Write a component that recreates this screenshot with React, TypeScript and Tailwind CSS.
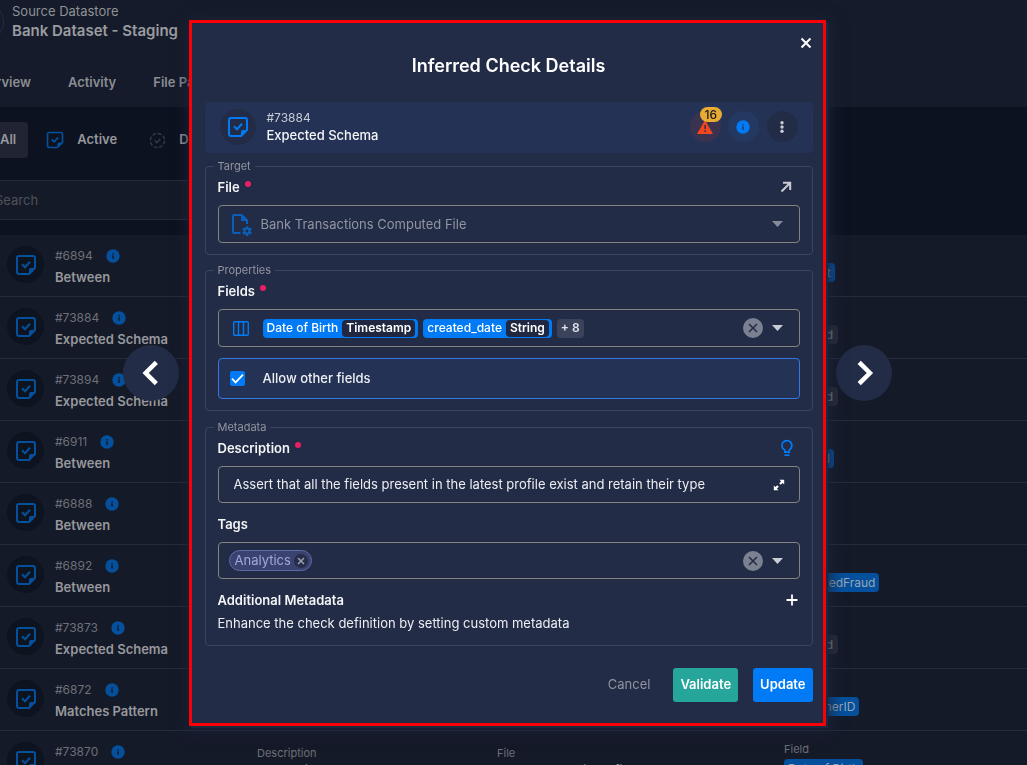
import { useState } from "react";
import type { ReactNode } from "react";

type Check = {
  id: string;
  name: string;
  field?: string;
  muted?: boolean;
  description?: string;
  file?: string;
};

const checks: Check[] = [
  { id: "#6894", name: "Between", field: "amount" },
  { id: "#73884", name: "Expected Schema", field: "+ 1 field", muted: true },
  { id: "#73894", name: "Expected Schema", field: "+ 1 field", muted: true },
  { id: "#6911", name: "Between", field: "interval" },
  { id: "#6888", name: "Between" },
  { id: "#6892", name: "Between", field: "isFlaggedFraud" },
  { id: "#73873", name: "Expected Schema", field: "+ 1 field", muted: true },
  { id: "#6872", name: "Matches Pattern", field: "CustomerID" },
  {
    id: "#73870",
    name: "Metric",
    field: "Date of Birth",
    description: "Values lie between the bounds",
    file: "bank_transactions_file",
  },
];

function CheckNote({ className }: { className: string }) {
  return (
    <svg viewBox="0 0 24 24" fill="none" stroke="currentColor" strokeWidth="2" className={className} aria-hidden="true">
      <path d="M15 21H5a2 2 0 0 1-2-2V5a2 2 0 0 1 2-2h14a2 2 0 0 1 2 2v10z" strokeLinejoin="round" />
      <path d="M15 21v-4a2 2 0 0 1 2-2h4z" fill="currentColor" stroke="none" />
      <path d="M8 11.2l3 3 5-5.4" />
    </svg>
  );
}

function DashedCheck({ className }: { className: string }) {
  return (
    <svg viewBox="0 0 24 24" fill="none" stroke="currentColor" strokeWidth="2" className={className} aria-hidden="true">
      <circle cx="12" cy="12" r="10" strokeDasharray="5.5 2.35" />
      <path d="M8 12l3 3 5-5.4" />
    </svg>
  );
}

function InfoDot({ className, inner }: { className: string; inner: string }) {
  return (
    <svg viewBox="0 0 24 24" className={className} aria-hidden="true">
      <circle cx="12" cy="12" r="11.5" fill="currentColor" />
      <path d="M11 7h2.4v2.4H11zM10.2 11h3.2v6H11v-4h-.8z" className={inner} />
    </svg>
  );
}

function FileCog() {
  return (
    <svg viewBox="0 0 24 24" className="size-6" fill="currentColor" aria-hidden="true">
      <path d="M6 2a2 2 0 0 0-2 2v16a2 2 0 0 0 2 2h6.7a7 7 0 0 1-.6-2H6V4h7v5h5v3.1a7 7 0 0 1 2 0V8l-6-6z" />
      <path d="M13 3h2l5 5v1h-7z" />
      <path
        fillRule="evenodd"
        d="M22.7 19.6V18.6L23.8 17.8C23.9 17.7 24 17.6 23.9 17.5L22.9 15.8C22.9 15.7 22.7 15.7 22.6 15.7L21.4 16.2C21.1 16 20.8 15.8 20.5 15.7L20.3 14.4C20.3 14.3 20.2 14.2 20.1 14.2H18.1C17.9 14.2 17.8 14.3 17.8 14.4L17.6 15.7C17.3 15.9 17.1 16 16.8 16.2L15.6 15.7C15.5 15.7 15.4 15.7 15.3 15.8L14.3 17.5C14.3 17.6 14.3 17.7 14.4 17.8L15.5 18.6V19.6L14.4 20.4C14.3 20.5 14.2 20.6 14.3 20.7L15.3 22.4C15.4 22.5 15.5 22.5 15.6 22.5L16.8 22C17 22.2 17.3 22.4 17.6 22.5L17.8 23.8C17.9 23.9 18 24 18.1 24H20.1C20.2 24 20.3 23.9 20.3 23.8L20.5 22.5C20.8 22.4 21 22.2 21.3 22L22.5 22.4C22.6 22.4 22.7 22.4 22.8 22.3L23.8 20.6C23.9 20.5 23.9 20.4 23.8 20.4ZM19 20.5C18.2 20.5 17.5 19.8 17.5 19S18.2 17.5 19 17.5 20.5 18.2 20.5 19 19.8 20.5 19 20.5Z"
      />
    </svg>
  );
}

function Caret({ className }: { className: string }) {
  return (
    <svg viewBox="0 0 11 6" className={className} fill="currentColor" aria-hidden="true">
      <path d="M0 0h11L5.5 6z" />
    </svg>
  );
}

function ClearIcon() {
  return (
    <svg viewBox="0 0 20 20" className="size-5" aria-hidden="true">
      <circle cx="10" cy="10" r="10" fill="#7c8191" />
      <path d="M6 6l8 8M14 6l-8 8" stroke="#232c46" strokeWidth="1.6" />
    </svg>
  );
}

function Chevron({ flip }: { flip?: boolean }) {
  return (
    <svg viewBox="0 0 24 24" className="size-8" fill="none" stroke="white" strokeWidth="3.4" aria-hidden="true">
      <path d={flip ? "M8.4 4l8 8-8 8" : "M16 4l-8 8 8 8"} />
    </svg>
  );
}

function Section({ title, className, children }: { title: string; className: string; children: ReactNode }) {
  return (
    <fieldset className={`min-w-0 rounded border border-[#3c4560] px-3 pb-[11px] ${className}`}>
      <legend className="-ml-1 px-1 text-[11px] leading-4 text-[#9295a1]">{title}</legend>
      <div className="pt-[3px]">{children}</div>
    </fieldset>
  );
}

function FieldLabel({ htmlFor, required, children }: { htmlFor: string; required?: boolean; children: ReactNode }) {
  return (
    <label htmlFor={htmlFor} className="flex gap-[5px] text-[13px] leading-5 font-semibold text-[#f4f5f7]">
      {children}
      {required && <span className="mt-1 size-[6px] rounded-full bg-[#e91e63]" />}
    </label>
  );
}

function FieldChip({ name, type }: { name: string; type: string }) {
  return (
    <span className="flex h-[19px] items-center rounded bg-[#007bf5] pr-[3px] pl-1 text-xs font-medium text-white">
      {name}
      <span className="ml-1 flex h-[17px] items-center rounded bg-[#1f2840] px-1 text-xs font-semibold">{type}</span>
    </span>
  );
}

function Background() {
  return (
    <div className="h-screen overflow-hidden bg-[#151a29]">
      <header className="h-[107px] bg-[#151b2a]">
        <div className="-ml-9 flex gap-[8px] pt-px">
          <span className="mt-px size-10 rounded-full border border-[#262c3c]" />
          <div>
            <p className="text-[13px] leading-5 text-[#8f9196]">Source Datastore</p>
            <h1 className="text-[15px] leading-5 font-semibold text-[#9b9ca0]">Bank Dataset - Staging</h1>
          </div>
        </div>
        <nav className="-ml-[29px] flex gap-[37px] pt-7 text-[13px] leading-6 font-semibold whitespace-nowrap text-[#8b8d92]">
          <a href="#overview">Overview</a>
          <a href="#activity">Activity</a>
          <a href="#file-patterns">File Patterns</a>
        </nav>
      </header>
      <div className="h-32 bg-[#0d1221] pt-[15px]">
        <div className="-ml-3 flex items-center text-[13px] font-semibold text-[#96979b]">
          <button className="h-9 rounded bg-[#212432] px-3">All</button>
          <button className="flex items-center gap-[12px] pl-[17px]">
            <CheckNote className="size-5 text-[#04509c]" />
            Active
          </button>
          <button className="flex items-center gap-[13px] pl-8">
            <DashedCheck className="size-[17px] text-[#33394b]" />
            Draft
          </button>
        </div>
        <input
          aria-label="Search"
          placeholder="Search"
          className="-ml-5 mt-[22px] h-10 w-3/4 border border-[#262b3a] bg-[#151a29] pl-[14px] text-[13px] placeholder:text-[#4f5259]"
        />
      </div>
      <ul>
        {checks.map((check) => (
          <li
            key={check.id}
            className="grid h-[62px] grid-cols-[48px_202px_240px_287px_1fr] overflow-hidden border-b border-[#262c3a] pl-[7px]"
          >
            <span className="mt-[11px] flex size-[37px] items-center justify-center rounded-full bg-[#0e1320]">
              <CheckNote className="size-6 text-[#04509c]" />
            </span>
            <div className="pt-[11px]">
              <p className="flex items-center gap-[13px] text-xs leading-5 text-[#6d7077]">
                {check.id}
                <InfoDot className="size-[14px] text-[#04509c]" inner="fill-[#151a29]" />
              </p>
              <p className="text-[13px] leading-[22px] font-semibold text-[#97989c]">{check.name}</p>
            </div>
            <div className="pt-[13px]">
              {check.description && (
                <>
                  <p className="text-[11px] leading-[18px] text-[#6d7077]">Description</p>
                  <p className="text-[13px] leading-4 text-[#97989c]">{check.description}</p>
                </>
              )}
            </div>
            <div className="pt-[13px]">
              {check.file && (
                <>
                  <p className="text-[11px] leading-[18px] text-[#6d7077]">File</p>
                  <p className="text-[13px] leading-4 text-[#97989c]">{check.file}</p>
                </>
              )}
            </div>
            {check.field && (
              <div className="pt-[9px]">
                <p className="text-[11px] leading-[18px] text-[#6d7077]">Field</p>
                <p
                  className={
                    check.muted
                      ? "mt-px w-fit rounded bg-[#262b38] px-[5px] text-xs leading-[19px] text-[#8f9196]"
                      : "mt-px w-fit rounded bg-[#04509c] px-1 text-xs leading-[19px] text-[#9aa6b5]"
                  }
                >
                  {check.field}
                </p>
              </div>
            )}
          </li>
        ))}
      </ul>
    </div>
  );
}

const inputBox = "flex items-center rounded border border-[#83837f]";

export default function App() {
  const [allowOther, setAllowOther] = useState(true);
  const [description, setDescription] = useState(
    "Assert that all the fields present in the latest profile exist and retain their type",
  );

  return (
    <div className="font-['Inter','Liberation_Sans',sans-serif]">
      <Background />
      <div className="fixed inset-0 flex items-start justify-center pt-5 pr-[13px]">
        <div className="flex items-center gap-[10px]">
          <button aria-label="Previous check" className="flex size-14 items-center justify-center rounded-full bg-[#232c46]">
            <Chevron />
          </button>

          <section
            role="dialog"
            aria-labelledby="dialog-title"
            className="relative w-[637px] border-[3px] border-[#fb0007] bg-[#232c46] pt-[29px] pr-[10px] pb-[21px] pl-[13px] shadow-[2px_2px_0_#1c2740,2px_2px_14px_2px_#1a2439]"
          >
            <button aria-label="Close" className="absolute top-[14px] right-[11px]">
              <svg viewBox="0 0 12 12" className="size-3" stroke="white" strokeWidth="2" aria-hidden="true">
                <path d="M1.5 1.5l9 9M10.5 1.5l-9 9" />
              </svg>
            </button>
            <h2 id="dialog-title" className="mb-[22px] text-center text-lg leading-7 font-semibold text-white">
              Inferred Check Details
            </h2>

            <div className="mb-[5px] flex h-[51px] items-center rounded bg-[#243355] px-[15px] pb-[2px]">
              <span className="flex size-9 items-center justify-center rounded-full bg-[#232c46]">
                <CheckNote className="size-6 text-[#007bf5]" />
              </span>
              <div className="ml-[11px] flex-1">
                <p className="text-xs leading-4 text-[#c9ccd5]">#73884</p>
                <p className="text-[13px] leading-[18px] font-medium text-[#f4f5f7]">Expected Schema</p>
              </div>
              <button aria-label="16 anomalies" className="relative flex size-[31px] items-center justify-center rounded-full bg-[#3a3350]">
                <svg viewBox="0 0 16 14" className="mt-px h-[14px] w-4" aria-hidden="true">
                  <path d="M8 0l8 14H0z" fill="#f4461c" />
                  <path d="M7.3 5h1.6v4H7.3zM7.3 10.3h1.6v1.6H7.3z" fill="#3a3350" />
                </svg>
                <span className="absolute -top-1 left-[10px] rounded-full bg-[#e8ac33] px-[5px] text-xs leading-[15px] font-medium text-[#16181f]">
                  16
                </span>
              </button>
              <button aria-label="Check information" className="ml-[7px] flex size-[31px] items-center justify-center rounded-full bg-[#243962]">
                <InfoDot className="size-[14px] text-[#007bf5]" inner="fill-[#243962]" />
              </button>
              <button aria-label="More actions" className="ml-2 flex size-[31px] items-center justify-center rounded-full bg-[#232c46]">
                <svg viewBox="0 0 4 12" className="h-3 w-1" fill="#c9ccd5" aria-hidden="true">
                  <circle cx="2" cy="1.7" r="1.7" />
                  <circle cx="2" cy="6" r="1.7" />
                  <circle cx="2" cy="10.3" r="1.7" />
                </svg>
              </button>
            </div>

            <Section title="Target" className="mb-[7px]">
              <div className="mb-2 flex items-center justify-between">
                <FieldLabel htmlFor="file" required>
                  File
                </FieldLabel>
                <a href="#file" aria-label="Open file" className="mr-2">
                  <svg viewBox="0 0 12 12" className="size-3" fill="none" stroke="#c9ccd5" strokeWidth="2" aria-hidden="true">
                    <path d="M3 1.8h7.2V9M10 2L1.5 10.5" />
                  </svg>
                </a>
              </div>
              <div className={`${inputBox} relative h-[38px] pl-[9px] text-[#0a5fb8]`}>
                <FileCog />
                <select
                  id="file"
                  disabled
                  className="ml-[9px] h-full flex-1 appearance-none bg-transparent pt-[2px] text-[13px] text-[#9195a1] opacity-100"
                >
                  <option>Bank Transactions Computed File</option>
                </select>
                <Caret className="pointer-events-none absolute right-4 h-[6px] w-[11px] text-[#858a99]" />
              </div>
            </Section>

            <Section title="Properties" className="mb-2">
              <div className="mb-2">
                <FieldLabel htmlFor="fields" required>
                  Fields
                </FieldLabel>
              </div>
              <div className={`${inputBox} h-[38px] pr-4 pl-[14px]`}>
                <svg viewBox="0 0 16 15" className="h-[15px] w-4" fill="none" stroke="#007bf5" strokeWidth="1.4" aria-hidden="true">
                  <rect x="0.7" y="0.7" width="14.6" height="13.6" rx="1" />
                  <path d="M5.5 1v13M10.5 1v13" />
                </svg>
                <div className="ml-[14px] flex flex-1 items-center gap-[5px]">
                  <FieldChip name="Date of Birth" type="Timestamp" />
                  <FieldChip name="created_date" type="String" />
                  <span className="flex h-[19px] items-center rounded bg-[#3a435b] px-1 text-xs font-semibold text-[#e3e5ea]">+ 8</span>
                </div>
                <button aria-label="Clear fields">
                  <ClearIcon />
                </button>
                <button id="fields" aria-label="Open fields list" className="ml-[9px]">
                  <Caret className="h-[6px] w-[11px] text-[#c9ccd5]" />
                </button>
              </div>
              <label className="mt-[11px] flex h-[41px] items-center rounded border border-[#3578e5] bg-[#243355] pl-[11px] text-[13px] font-medium text-[#eceef2]">
                <span className="relative mr-[18px] grid size-[15px] place-items-center">
                  <input
                    type="checkbox"
                    checked={allowOther}
                    onChange={(e) => setAllowOther(e.target.checked)}
                    className="peer size-[15px] appearance-none rounded-[2px] border border-[#007bf5] checked:bg-[#007bf5]"
                  />
                  <svg
                    viewBox="0 0 15 15"
                    className="pointer-events-none absolute hidden size-[15px] peer-checked:block"
                    fill="none"
                    stroke="white"
                    strokeWidth="1.8"
                    aria-hidden="true"
                  >
                    <path d="M2 7.6l3.6 3.8L13 3.6" />
                  </svg>
                </span>
                Allow other fields
              </label>
            </Section>

            <Section title="Metadata" className="mb-[22px]">
              <div className="mb-2 flex items-center justify-between">
                <FieldLabel htmlFor="description" required>
                  Description
                </FieldLabel>
                <button aria-label="Suggest description" className="mr-[6px] h-5">
                  <svg viewBox="0 0 14 18" className="h-[18px] w-[14px]" fill="none" stroke="#007bf5" strokeWidth="1.7" aria-hidden="true">
                    <path d="M4.8 13.2v-2.1A5 5 0 1 1 9.2 11v2.2z" strokeLinejoin="round" />
                    <path d="M4.4 16.2h5.2" />
                  </svg>
                </button>
              </div>
              <div className={`${inputBox} h-[37px] pr-[14px] pl-[15px]`}>
                <input
                  id="description"
                  value={description}
                  onChange={(e) => setDescription(e.target.value)}
                  className="min-w-0 flex-1 bg-transparent text-[13px] text-[#eceef2] outline-none"
                />
                <button aria-label="Expand description">
                  <svg viewBox="0 0 12 12" className="size-3" fill="white" aria-hidden="true">
                    <path d="M6.5 0.8h4.7v4.7L9.6 3.9 7.7 5.8l-1.5-1.5 1.9-1.9zM5.5 11.2H0.8V6.5l1.6 1.6 1.9-1.9 1.5 1.5-1.9 1.9z" />
                  </svg>
                </button>
              </div>
              <div className="mt-[11px] mb-2">
                <FieldLabel htmlFor="tags">Tags</FieldLabel>
              </div>
              <div className={`${inputBox} h-[37px] pr-4 pl-[10px]`}>
                <span className="flex h-[21px] items-center gap-[3px] rounded-full border border-[#606ba6] bg-[#3a4370] pr-[3px] pl-[5px] text-[13px] text-[#9fa8da]">
                  Analytics
                  <button aria-label="Remove Analytics" className="flex size-[14px] items-center justify-center rounded-full bg-[#252d48]">
                    <svg viewBox="0 0 8 8" className="size-2" stroke="#9a9fb4" strokeWidth="1.5" aria-hidden="true">
                      <path d="M1 1l6 6M7 1L1 7" />
                    </svg>
                  </button>
                </span>
                <span className="flex-1" />
                <button aria-label="Clear tags">
                  <ClearIcon />
                </button>
                <button id="tags" aria-label="Open tags list" className="ml-[9px]">
                  <Caret className="h-[6px] w-[11px] text-[#c9ccd5]" />
                </button>
              </div>
              <div className="mt-[11px] flex h-5 items-center justify-between">
                <h3 className="text-[13px] leading-5 font-semibold text-[#f4f5f7]">Additional Metadata</h3>
                <button aria-label="Add metadata" className="mr-[2px]">
                  <svg viewBox="0 0 12 12" className="size-3" stroke="white" strokeWidth="1.8" aria-hidden="true">
                    <path d="M6 0.5v11M0.5 6h11" />
                  </svg>
                </button>
              </div>
              <p className="mt-[3px] pb-px text-[13px] leading-5 text-[#eceef2]">
                Enhance the check definition by setting custom metadata
              </p>
            </Section>

            <footer className="flex items-center justify-end text-[13px]">
              <button className="mr-[23px] text-[#8f93a0]">Cancel</button>
              <button className="mr-[15px] h-[34px] rounded-[3px] bg-[#26a69a] px-[7px] font-semibold text-white">Validate</button>
              <button className="h-[34px] rounded-[3px] bg-[#007bf5] px-[7px] font-semibold text-white">Update</button>
            </footer>
          </section>

          <button aria-label="Next check" className="flex size-14 items-center justify-center rounded-full bg-[#232c46]">
            <Chevron flip />
          </button>
        </div>
      </div>
    </div>
  );
}
